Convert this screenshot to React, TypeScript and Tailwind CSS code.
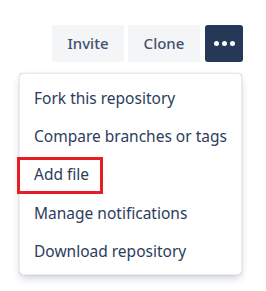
import React from "react";

const items = [
  "Fork this repository",
  "Compare branches or tags",
  "Add file",
  "Manage notifications",
  "Download repository",
];

export default function App() {
  return (
    <div
      className="relative h-[291px] w-[266px] overflow-hidden bg-white"
      style={{ fontFamily: '"Noto Sans", "Open Sans", sans-serif' }}
    >
      <div className="flex justify-end gap-[4px] pr-[23px] pt-[25px]">
        <button className="flex h-[37px] w-[72px] items-center justify-center rounded-[3px] bg-[#f4f5f7] text-[15px] font-medium text-[#42526e]">
          Invite
        </button>
        <button className="flex h-[37px] w-[72px] items-center justify-center rounded-[3px] bg-[#f4f5f7] text-[15px] font-medium text-[#42526e]">
          Clone
        </button>
        <button className="ml-[1px] flex h-[37px] w-[38px] items-center justify-center gap-[3px] rounded-[3px] bg-[#253858]">
          <span className="h-[5px] w-[5px] rounded-full bg-white" />
          <span className="h-[5px] w-[5px] rounded-full bg-white" />
          <span className="h-[5px] w-[5px] rounded-full bg-white" />
        </button>
      </div>

      <div className="ml-[19px] mt-[11px] w-[223px] rounded-[4px] border border-[#ebecf0] bg-white pb-[3px] pt-[5px] shadow-[0_4px_8px_-2px_rgba(9,30,66,0.25),0_0_1px_rgba(9,30,66,0.31)]">
        {items.map((item) => (
          <div
            key={item}
            className="flex h-[38.4px] items-center whitespace-nowrap pl-[14px] text-[15.5px] text-[#2c3d5c]"
          >
            {item}
          </div>
        ))}
      </div>

      <div className="absolute left-[17px] top-[157px] h-[37px] w-[86px] border-[3px] border-[#e81c24]" />
    </div>
  );
}
